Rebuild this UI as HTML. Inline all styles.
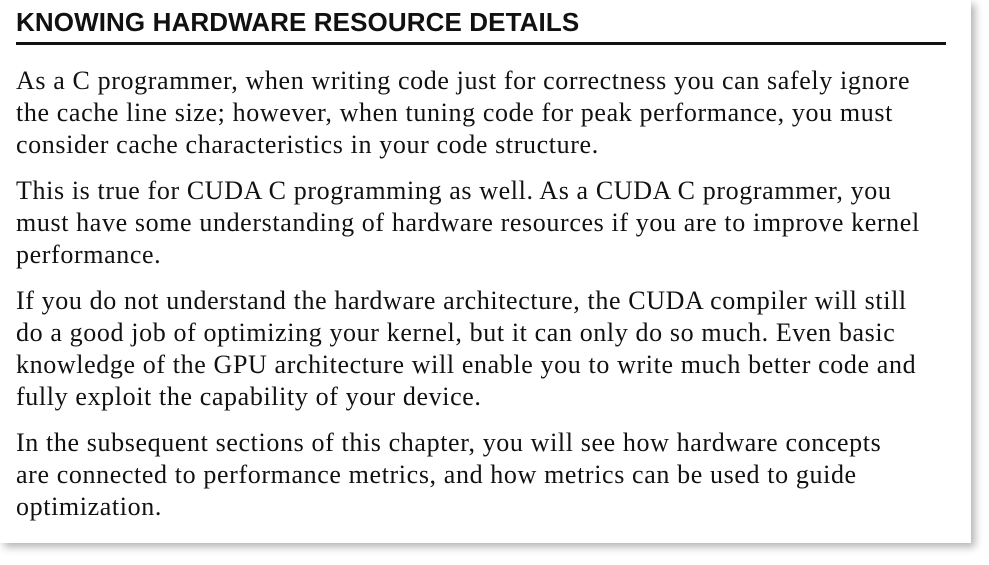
<!DOCTYPE html>
<html><head><style>
html,body{margin:0;padding:0;width:989px;height:565px;background:#fff;overflow:hidden}
.page{position:absolute;left:0;top:0;width:971px;height:543px;background:#fff;box-shadow:4px 4px 8px rgba(0,0,0,0.3)}
h1{position:absolute;left:16px;top:7px;margin:0;font:bold 26px "Liberation Sans",sans-serif;color:#111;letter-spacing:0.1px}
.rule{position:absolute;left:16px;top:42px;width:930px;height:3px;background:#111}
.t{position:absolute;left:16px;font:26px "Liberation Serif",serif;color:#111;line-height:32px;white-space:nowrap;letter-spacing:0.62px}
</style></head><body>
<div class="page">
<h1>KNOWING HARDWARE RESOURCE DETAILS</h1>
<div class="rule"></div>
<div class="t" style="top:65px">As a C programmer, when writing code just for correctness you can safely ignore<br>the cache line size; however, when tuning code for peak performance, you must<br>consider cache characteristics in your code structure.</div>
<div class="t" style="top:175px">This is true for CUDA C programming as well. As a CUDA C programmer, you<br>must have some understanding of hardware resources if you are to improve kernel<br>performance.</div>
<div class="t" style="top:285px">If you do not understand the hardware architecture, the CUDA compiler will still<br>do a good job of optimizing your kernel, but it can only do so much. Even basic<br>knowledge of the GPU architecture will enable you to write much better code and<br>fully exploit the capability of your device.</div>
<div class="t" style="top:427px">In the subsequent sections of this chapter, you will see how hardware concepts<br>are connected to performance metrics, and how metrics can be used to guide<br>optimization.</div>
</div>
</body></html>
